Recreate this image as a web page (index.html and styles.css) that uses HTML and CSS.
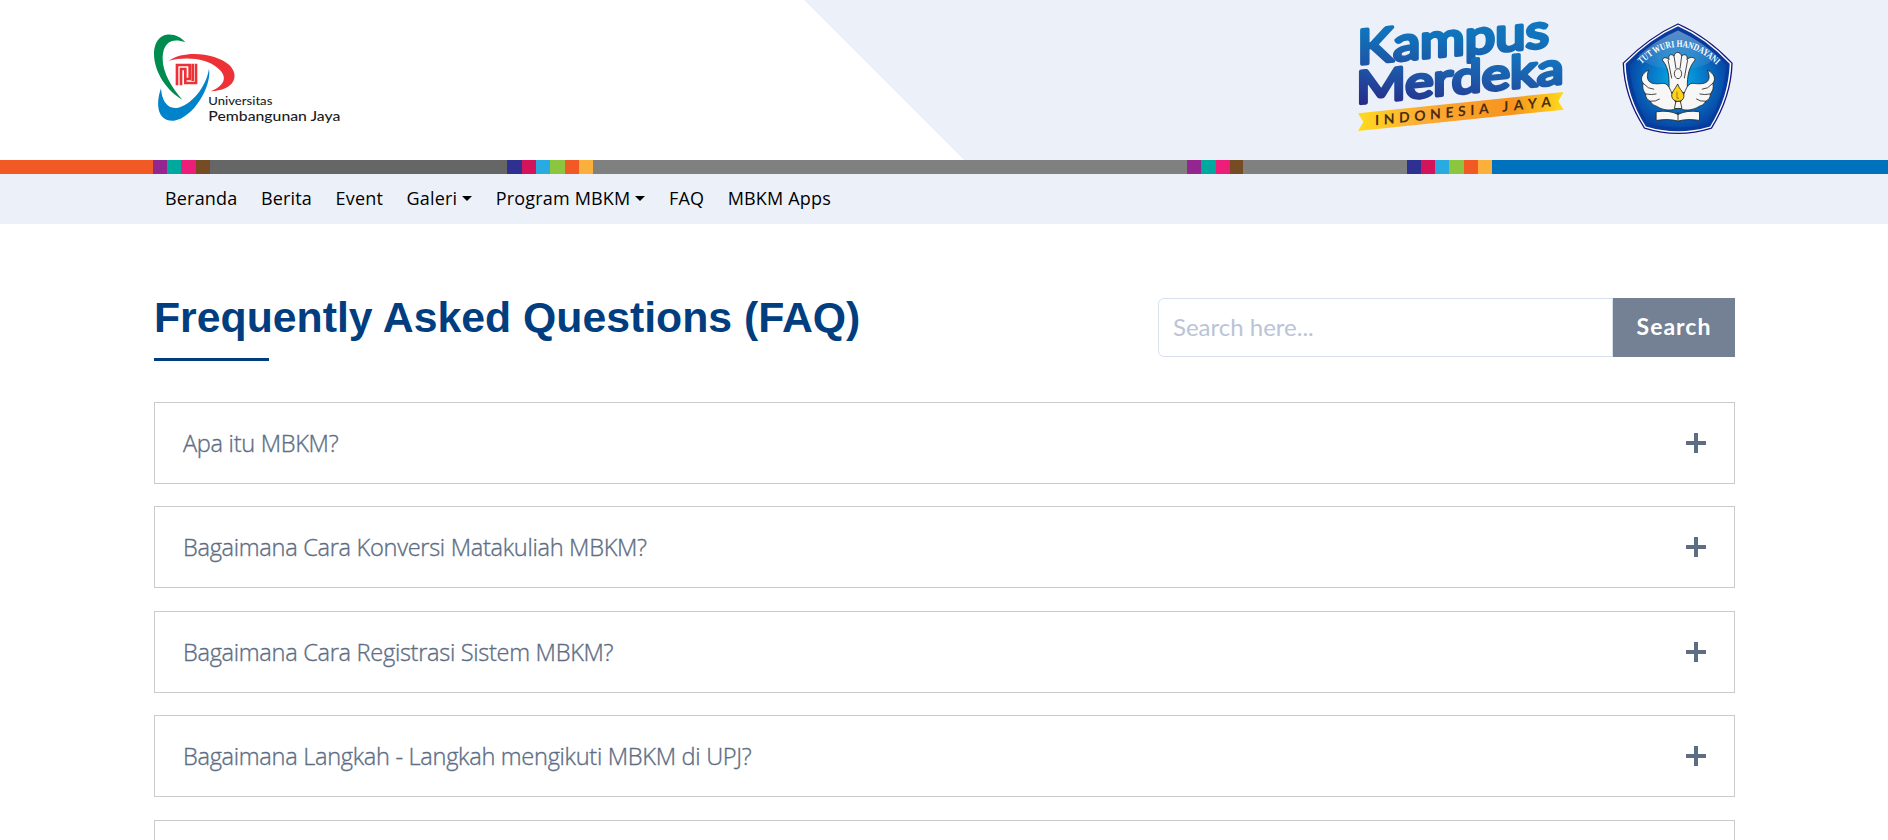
FILE: index.html
```
<!DOCTYPE html>
<html lang="id">
<head>
<meta charset="utf-8">
<title>Frequently Asked Questions (FAQ)</title>
<link rel="stylesheet" href="styles.css">
</head>
<body>
<header class="header">
  <div class="container header-inner">
    <svg class="logo-upj" viewBox="42 40 576 282" role="img" aria-label="Universitas Pembangunan Jaya">
      <path fill="#008c4f" d="M136 68C112 36 42 26 42 106C44 160 82 215 127 240C96 204 66 158 68 112C70 68 96 53 136 68Z"/>
      <path fill="#0083cb" d="M207 147C216 200 160 294 102 303C52 307 46 254 63 206C65 240 80 268 110 265C150 259 198 205 207 147Z"/>
      <path fill="#ed3237" d="M86 123C136 88 232 102 268 136C300 168 284 212 212 215C262 194 260 166 232 144C198 116 140 110 86 123Z"/>
      <path fill="none" stroke="#ed3237" stroke-width="8" d="M111 197V136H149V178H134M123 197V148H136V190H168V132M158 132V184"/>
      <text class="upj-name" x="205" y="257" font-size="35" textLength="192" lengthAdjust="spacingAndGlyphs">Universitas</text>
      <text class="upj-name" x="205" y="303" font-size="42" textLength="396" lengthAdjust="spacingAndGlyphs">Pembangunan Jaya</text>
    </svg>
    <div class="partners">
      <svg class="logo-km" viewBox="54 0 618 366" role="img" aria-label="Kampus Merdeka">
        <defs>
          <linearGradient id="km1" x1="0" y1="1" x2=".45" y2="0"><stop offset="0" stop-color="#234a9d"/><stop offset=".6" stop-color="#1172ba"/><stop offset="1" stop-color="#0f79c2"/></linearGradient>
          <linearGradient id="km2" x1="0" y1=".8" x2=".7" y2="0"><stop offset="0" stop-color="#262b88"/><stop offset=".55" stop-color="#1d5cab"/><stop offset="1" stop-color="#0f79c2"/></linearGradient>
          <linearGradient id="rib"><stop offset="0" stop-color="#ffda1c"/><stop offset=".3" stop-color="#fbad36"/><stop offset=".75" stop-color="#f7931e"/><stop offset="1" stop-color="#ffd91a"/></linearGradient>
        </defs>
        <g transform="translate(52 163) skewY(-5.2)"><text class="km-word" fill="url(#km1)" stroke="url(#km1)" font-size="142" textLength="575" lengthAdjust="spacingAndGlyphs">Kampus</text></g>
        <g transform="translate(49 281) skewY(-5.6)"><text class="km-word" fill="url(#km2)" stroke="url(#km2)" font-size="134" textLength="622" lengthAdjust="spacingAndGlyphs">Merdeka</text></g>
        <path fill="url(#rib)" d="M54 310L671 246L655 274L671 299L54 363L70 336Z"/>
        <g transform="translate(105 346) skewY(-6.1)">
          <text class="km-tag" font-size="42" textLength="341">INDONESIA</text>
          <text class="km-tag" x="382" font-size="42" textLength="146">JAYA</text>
        </g>
      </svg>
      <svg class="logo-seal" viewBox="66 36 338 342" role="img" aria-label="Tut Wuri Handayani">
        <defs>
          <radialGradient id="seal" cx=".5" cy=".5" r=".55"><stop offset="0" stop-color="#00b4ee"/><stop offset=".5" stop-color="#0878c8"/><stop offset="1" stop-color="#0640a0"/></radialGradient>
          <linearGradient id="gloss" x1="0" y1="0" x2="0" y2="1"><stop offset="0" stop-color="#fff" stop-opacity=".35"/><stop offset="1" stop-color="#fff" stop-opacity=".05"/></linearGradient>
          <path id="motto" d="M124 163Q235 57 350 163"/>
        </defs>
        <path fill="#fff" stroke="#17167a" stroke-width="4" d="M235 41Q322 79 398 159Q395 262 336 355Q235 387 134 355Q73 262 70 159Q150 79 235 41Z"/>
        <path fill="#073b9c" d="M235 48Q318 84 391 161Q388 260 332 350Q235 379 138 350Q80 260 77 161Q153 84 235 48Z"/>
        <path fill="url(#seal)" d="M235 61Q314 95 380 164Q376 258 326 341Q235 365 144 341Q94 258 89 164Q158 95 235 61Z"/>
        <path fill="url(#gloss)" d="M235 61Q300 90 352 136Q325 178 235 177Q145 178 115 137Q170 88 235 61Z"/>
        <g fill="#f7f7f7" stroke="#222" stroke-width="2.5" stroke-linejoin="round">
          <path d="M208 248C208 210 211 178 188 150C189 140 202 141 208 149C204 136 213 128 223 138C226 123 242 123 246 138C255 128 266 136 262 149C268 140 284 139 287 149C262 178 263 210 263 248Z"/>
          <path d="M235 292C214 254 212 220 190 220C160 224 133 222 146 180C126 190 119 207 130 220C126 236 132 244 137 252C137 264 144 270 151 274C156 284 164 287 170 289C190 303 222 305 235 292Z"/>
          <path d="M235 292C256 254 258 220 280 220C310 224 341 222 324 180C344 190 351 207 340 220C344 236 338 244 333 252C333 264 326 270 319 274C314 284 306 287 300 289C280 303 248 305 235 292Z"/>
          <path d="M169 306Q208 300 235 314Q262 300 300 306V332Q262 326 235 334Q208 326 169 332Z"/>
          <path d="M224 296L229 274H242L247 296Z"/>
          <ellipse cx="235" cy="191" rx="11" ry="15"/>
          <path fill="none" d="M205 150L216 205M223 138L229 176M246 138L241 176M264 150L254 205M235 307V333M130 220Q145 238 163 238M137 252Q155 256 170 252M151 274Q167 276 180 267M340 220Q325 238 307 238M333 252Q315 256 300 252M319 274Q303 276 290 267"/>
          <path fill="#ffd31a" d="M234 222C226 238 215 247 216 259C218 279 252 280 253 259C253 247 240 240 234 222Z"/>
          <path fill="none" stroke="#8b6210" d="M232 245V265H238"/>
        </g>
        <text class="seal-motto" font-size="29"><textPath href="#motto" textLength="258" lengthAdjust="spacingAndGlyphs">TUT WURI HANDAYANI</textPath></text>
      </svg>
    </div>
  </div>
</header>
<div class="stripe"></div>
<nav class="nav">
  <div class="container nav-list">
    <a class="nav-link">Beranda</a>
    <a class="nav-link">Berita</a>
    <a class="nav-link">Event</a>
    <a class="nav-link">Galeri<span class="caret"></span></a>
    <a class="nav-link">Program MBKM<span class="caret"></span></a>
    <a class="nav-link">FAQ</a>
    <a class="nav-link">MBKM Apps</a>
  </div>
</nav>
<main class="container">
  <div class="title-row">
    <h1 class="title">Frequently Asked Questions (FAQ)</h1>
    <form class="search">
      <input class="search-input" type="text" placeholder="Search here...">
      <button class="search-button" type="button">Search</button>
    </form>
  </div>
  <section class="faq">
    <div class="faq-item"><span>Apa itu MBKM?</span><i class="plus"></i></div>
    <div class="faq-item"><span>Bagaimana Cara Konversi Matakuliah MBKM?</span><i class="plus"></i></div>
    <div class="faq-item"><span>Bagaimana Cara Registrasi Sistem MBKM?</span><i class="plus"></i></div>
    <div class="faq-item"><span>Bagaimana Langkah - Langkah mengikuti MBKM di UPJ?</span><i class="plus"></i></div>
    <div class="faq-item faq-item-clipped"></div>
  </section>
</main>
</body>
</html>
```
FILE: styles.css
```
* { box-sizing: border-box; }
body {
  margin: 0;
  height: 840px;
  overflow: hidden;
  background: #fff;
  font-family: "Open Sans", sans-serif;
}
.container { width: 1581px; margin-left: 154px; }

.header {
  height: 160px;
  background: #ecf1f9;
  position: relative;
}
.header::before {
  content: "";
  position: absolute;
  inset: 0;
  background: #fff;
  clip-path: polygon(0 0, 804px 0, 964px 100%, 0 100%);
}
.header-inner {
  position: relative;
  display: flex;
  justify-content: space-between;
  align-items: flex-start;
}
.logo-upj { width: 192px; height: 94px; margin-top: 33px; }
.upj-name { font-family: Lato, sans-serif; font-weight: 500; fill: #1c1c1c; }
.partners { display: flex; gap: 58px; padding: 10px 1px 0 0; }
.logo-km { width: 206px; height: 122px; }
.km-word {
  font-family: Lato, sans-serif;
  font-weight: 400;
  stroke-width: 11px;
  stroke-linejoin: round;
}
.km-tag { font-family: Lato, sans-serif; font-weight: 700; fill: #4a2c12; }
.logo-seal { width: 112px; height: 114px; margin-top: 12px; }
.seal-motto { font-family: "Liberation Serif", serif; font-weight: 700; fill: #fff; }

.stripe {
  height: 14px;
  background: linear-gradient(to right,
    #f15a24 152.7px, #93278f 152.7px 167px, #00a99d 167px 181.3px, #ed1e79 181.3px 195.6px, #754c24 195.6px 209.7px,
    #666 209.7px 507.5px,
    #2e3192 507.5px 521.7px, #d4145a 521.7px 536px, #29abe2 536px 550.2px, #8cc63f 550.2px 564.6px, #f15a24 564.6px 579px, #fbb03b 579px 593.3px,
    #808080 593.3px 1187.3px,
    #93278f 1187.3px 1201.5px, #00a99d 1201.5px 1215.6px, #ed1e79 1215.6px 1230px, #754c24 1230px 1243px,
    #808080 1243px 1406.8px,
    #2e3192 1406.8px 1421px, #d4145a 1421px 1435.2px, #29abe2 1435.2px 1449.4px, #8cc63f 1449.4px 1463.6px, #f15a24 1463.6px 1478px, #fbb03b 1478px 1492.5px,
    #0071bc 1492.5px);
}
.nav { height: 50px; background: #ecf1f9; }
.nav-list { display: flex; gap: 23.5px; padding-left: 11px; }
.nav-link {
  display: flex;
  align-items: center;
  height: 48px;
  font-size: 18px;
  font-weight: 500;
  letter-spacing: .18px;
  color: #000;
}
.caret {
  margin-left: 5px;
  border: 5px solid transparent;
  border-top-color: #000;
  border-bottom: 0;
}

.title-row { display: flex; justify-content: space-between; padding-top: 68px; }
.title {
  position: relative;
  height: 69px;
  margin: 0;
  font: 700 42.75px/50px "Liberation Sans", Arial, sans-serif;
  color: #003e80;
}
.title::after {
  content: "";
  position: absolute;
  left: 0;
  bottom: 0;
  width: 115px;
  height: 3px;
  background: #003e80;
}
.search { display: flex; height: 59px; margin-top: 6px; }
.search-input {
  width: 455px;
  padding: 0 14px 3px;
  border: 1px solid #d7e1ee;
  border-radius: 6px 0 0 6px;
  font: 400 24px Lato, sans-serif;
}
.search-input::placeholder { color: #bac4d6; opacity: 1; }
.search-button {
  width: 122px;
  padding: 0 0 3px;
  border: 0;
  background: #748194;
  color: #fff;
  font: 700 23px Lato, sans-serif;
  letter-spacing: 1px;
}

.faq { display: flex; flex-direction: column; gap: 22.8px; margin-top: 41px; }
.faq-item {
  display: flex;
  justify-content: space-between;
  align-items: center;
  flex: none;
  height: 81.67px;
  padding: 0 28px;
  border: 1px solid #cbcbcb;
  font-size: 23.6px;
  font-weight: 300;
  letter-spacing: -.31px;
  -webkit-text-stroke: .35px #5d6d84;
  color: #5d6d84;
}
.faq-item-clipped { height: 20px; border-bottom: 0; }
.plus {
  width: 20px;
  height: 20px;
  background:
    linear-gradient(#5d6d84, #5d6d84) center / 4px 100% no-repeat,
    linear-gradient(#5d6d84, #5d6d84) center / 100% 4px no-repeat;
}
```
